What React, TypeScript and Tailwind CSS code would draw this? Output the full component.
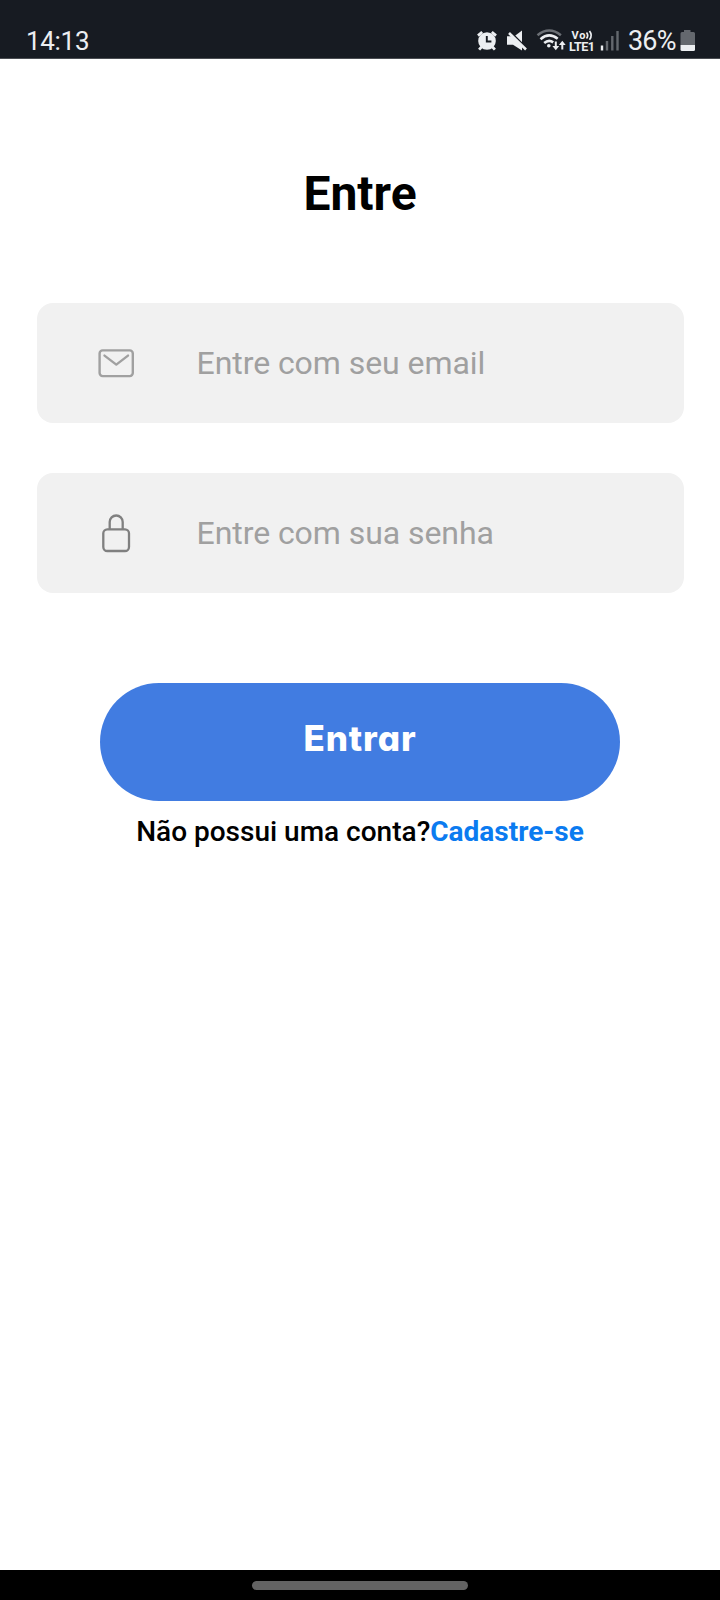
import type { ReactNode } from "react";

function StatusBar() {
  return (
    <header className="flex h-[59px] shrink-0 items-end justify-between border-b border-[#4a4d52] bg-[#171b22] pr-[25px] pl-[26px] text-[#eceef1]">
      <span className="text-[26px] leading-[33px] tracking-[-0.3px]">14:13</span>
      <div className="flex h-[34px] items-center">
        <svg className="h-[34px] w-[151px]" viewBox="477 24 151 34" fill="none">
          <g stroke="#eceef1" strokeWidth="2.8">
            <circle cx="487" cy="41" r="8.800" fill="#eceef1" stroke="none" />
            <path d="M478 35.600l4.200-3.600M496 35.600l-4.200-3.600M481.500 47l-2.400 2.600M492.500 47l2.400 2.600" />
            <path d="M486.800 36v5.500h4.600" stroke="#171b22" strokeWidth="1.900" />
          </g>
          <path d="M507 36.300h6L522 45.500v5l-9-5.700h-6z" fill="#eceef1" />
          <path d="M515 35.800l7-5.300v12.800z" fill="#eceef1" />
          <path d="M510.500 31.700l17 17" stroke="#171b22" strokeWidth="1.600" />
          <path d="M509 33l17 16.500" stroke="#eceef1" strokeWidth="2.600" />
          <g strokeWidth="2.600">
            <path d="M537.500 35.200q11.700-9.400 23.400 0" stroke="#6b6f75" />
            <path d="M540.500 39.200q8.500-7.400 17.200-.4M544.200 43q4.600-4 9-.6" stroke="#eceef1" />
          </g>
          <circle cx="548.800" cy="45.800" r="1.800" fill="#eceef1" />
          <path d="M555.800 41.500v6M562.300 49.600v-6" stroke="#eceef1" strokeWidth="2" />
          <path d="M552.400 46h6.800l-3.400 4.200zM558.900 45h6.800l-3.400-4.200z" fill="#eceef1" />
          <text x="571.500" y="39" className="fill-[#eceef1] text-[11px] font-bold" textLength="14">Vo</text>
          <path d="M586.500 32.500q2.400 3 0 6M589.500 31q3.400 4.300 0 8.800" stroke="#eceef1" strokeWidth="1.700" />
          <text x="569" y="51" className="fill-[#eceef1] text-[12.500px] font-bold" textLength="26">LTE1</text>
          <path d="M602 45.500v5" stroke="#eceef1" strokeWidth="2.400" />
          <path d="M607 41v9.500M612.300 36v14.500M617.500 31v19.500" stroke="#64686e" strokeWidth="2.400" />
        </svg>
        <span className="w-[49px] text-[27px] leading-[34px] tracking-[-0.8px]">36%</span>
        <svg className="ml-[3px] h-[34px] w-[15px]" viewBox="680 24 15 34">
          <path d="M684 30h6.500v2h3q1.500 0 1.500 1.500V45h-14.500V33.500q0-1.500 1.500-1.500h2z" fill="#64686e" />
          <path d="M680.500 45H695v4.500q0 1.500-1.500 1.500H682q-1.500 0-1.500-1.500z" fill="#eceef1" />
        </svg>
      </div>
    </header>
  );
}

function Field({ icon, label, type }: { icon: ReactNode; label: string; type: string }) {
  return (
    <label className="flex h-[120px] w-[647px] items-center rounded-[16px] bg-[#f1f1f1]">
      <span className="flex w-40 shrink-0 justify-center pr-[2px]">{icon}</span>
      <input
        type={type}
        placeholder={label}
        className="min-w-0 flex-1 bg-transparent text-[32px] tracking-[-0.06px] outline-none placeholder:text-[#a0a0a0]"
      />
    </label>
  );
}

function MailIcon() {
  return (
    <svg className="h-10 w-10" viewBox="0 0 40 40" fill="none" stroke="#a0a0a0" strokeWidth="2.400" strokeLinecap="round" strokeLinejoin="round">
      <rect x="3.600" y="7.400" width="33.200" height="25.700" rx="3" />
      <path d="M8.500 12.600l11.800 9 11.700-9" />
    </svg>
  );
}

function LockIcon() {
  return (
    <svg className="h-10 w-10" viewBox="0 0 40 40" fill="none" stroke="#808080" strokeWidth="2.300">
      <rect x="7.300" y="16.300" width="25.700" height="21.700" rx="4" />
      <path d="M13.700 16.300V9a6.500 6.500 0 0 1 13 0v7.300" />
    </svg>
  );
}

export default function App() {
  return (
    <div className="flex h-[1600px] w-[720px] flex-col bg-white font-['Roboto',sans-serif] text-black">
      <StatusBar />
      <main className="flex flex-1 flex-col items-center">
        <h1 className="mt-[107px] text-[48px] leading-[56px] font-bold">Entre</h1>
        <form className="mt-[81px] flex flex-col items-center">
          <div className="flex flex-col gap-[50px]">
            <Field type="email" label="Entre com seu email" icon={<MailIcon />} />
            <Field type="password" label="Entre com sua senha" icon={<LockIcon />} />
          </div>
          <button
            type="button"
            className="mt-[90px] flex h-[118px] w-[520px] items-center justify-center rounded-full bg-[#417ce1] pb-[7px] font-['Inter',sans-serif] text-[35px] font-extrabold tracking-[0.9px] text-white [font-feature-settings:'cv11']"
          >
            Entrar
          </button>
        </form>
        <p className="mt-[14px] flex text-[28px] leading-[34px] font-medium">
          Não possui uma conta?
          <a className="font-bold text-[#0b7bf0]">Cadastre-se</a>
        </p>
      </main>
      <footer className="flex h-[30px] shrink-0 items-center justify-center bg-black">
        <div className="h-[9px] w-[216px] rounded-full bg-[#636363]" />
      </footer>
    </div>
  );
}
